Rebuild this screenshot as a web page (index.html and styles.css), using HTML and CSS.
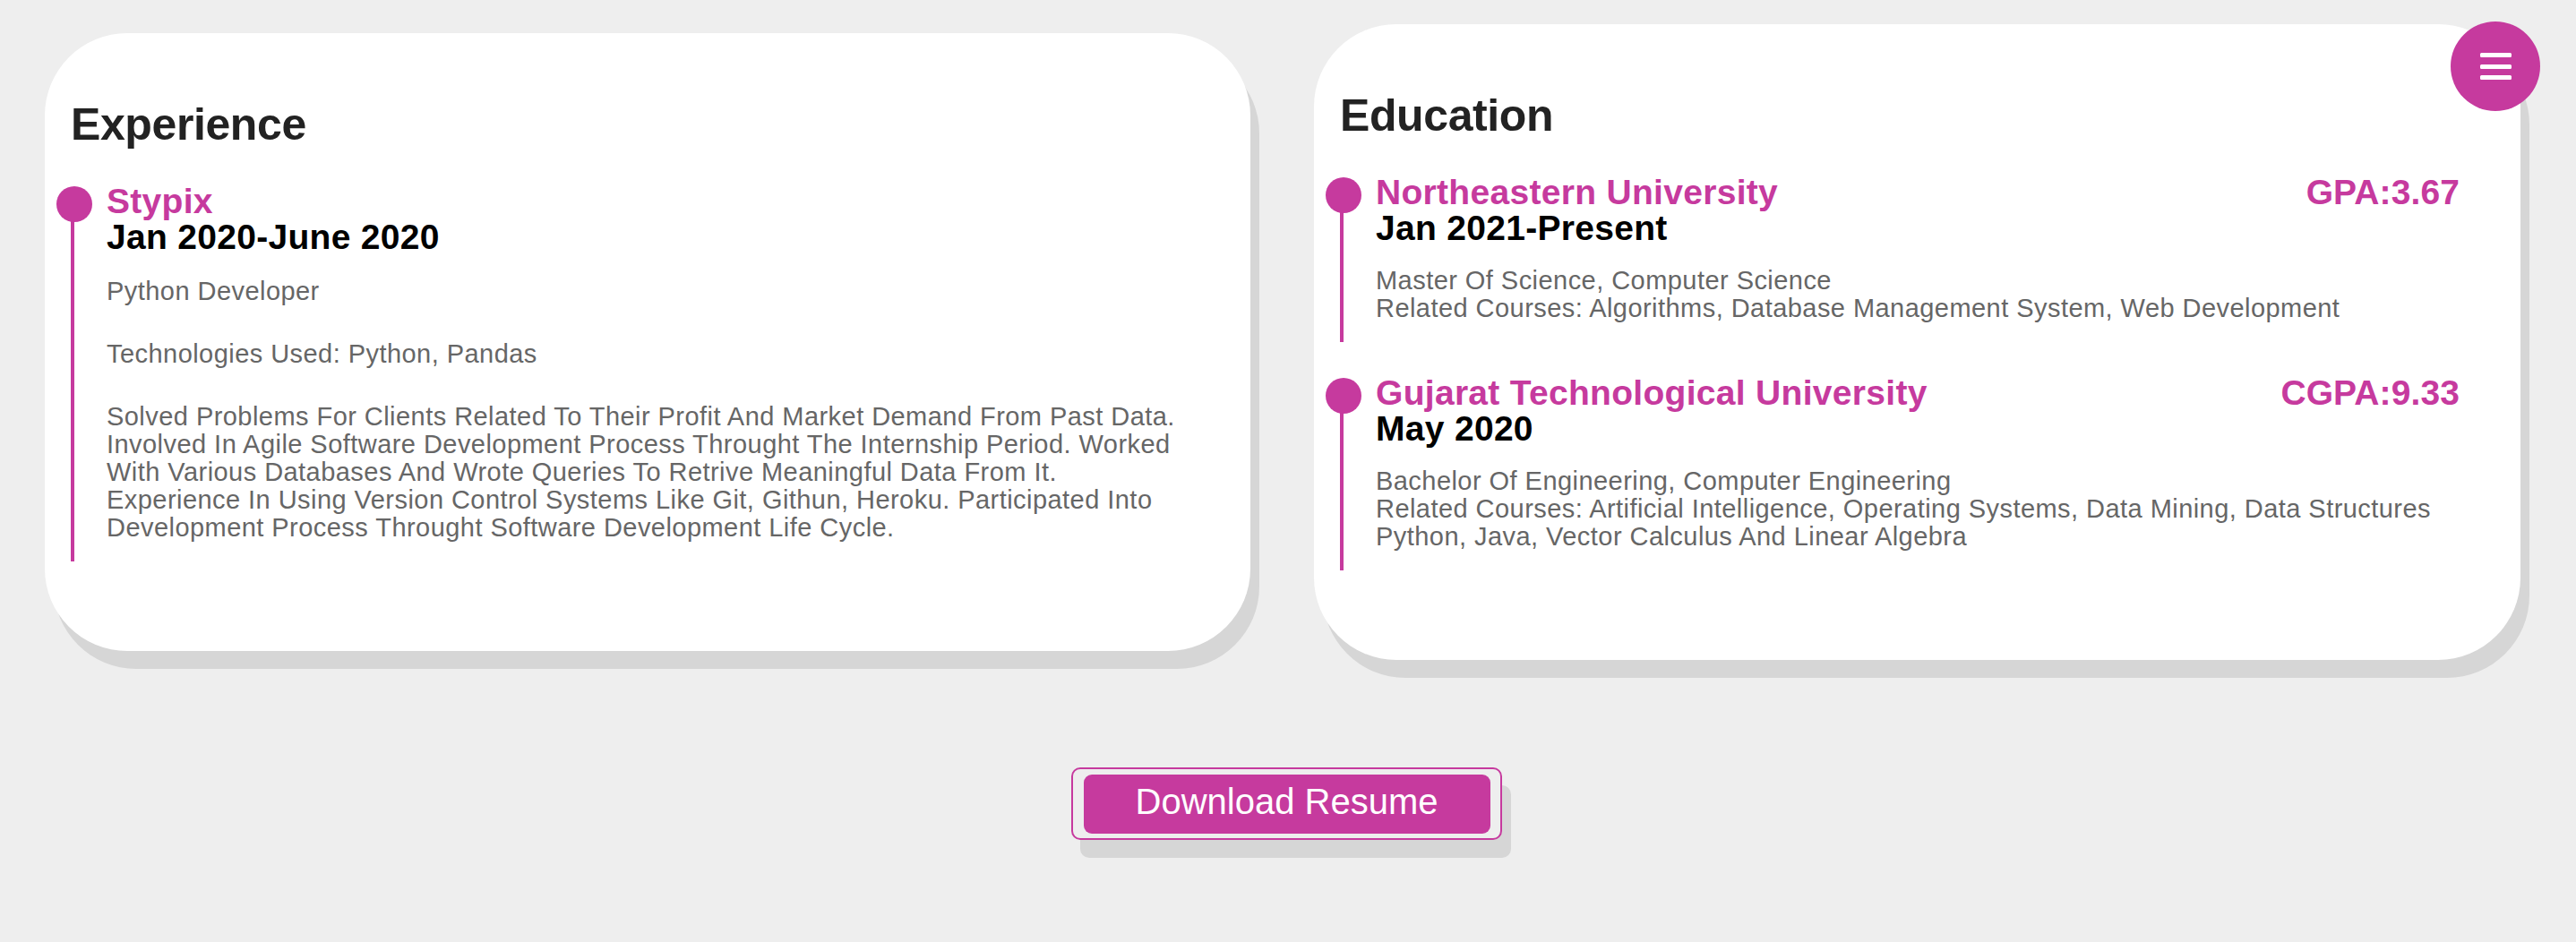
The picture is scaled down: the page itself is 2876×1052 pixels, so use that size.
FILE: index.html
```html
<!DOCTYPE html>
<html lang="en">
<head>
<meta charset="utf-8">
<title>Resume</title>
<link rel="stylesheet" href="styles.css">
</head>
<body>
<main class="page">
  <section class="row">
    <article class="card card-exp">
      <h2 class="card-title">Experience</h2>
      <div class="timeline">
        <div class="item">
          <div class="item-head">
            <h3 class="org">Stypix</h3>
          </div>
          <div class="date">Jan 2020-June 2020</div>
          <div class="desc">
            <p>Python Developer</p>
            <p>Technologies Used: Python, Pandas</p>
            <p>Solved Problems For Clients Related To Their Profit And Market Demand From Past Data.<br>Involved In Agile Software Development Process Throught The Internship Period. Worked<br>With Various Databases And Wrote Queries To Retrive Meaningful Data From It.<br>Experience In Using Version Control Systems Like Git, Githun, Heroku. Participated Into<br>Development Process Throught Software Development Life Cycle.</p>
          </div>
        </div>
      </div>
    </article>

    <article class="card card-edu">
      <h2 class="card-title">Education</h2>
      <div class="timeline">
        <div class="item">
          <div class="item-head">
            <h3 class="org">Northeastern University</h3>
            <span class="score">GPA:3.67</span>
          </div>
          <div class="date">Jan 2021-Present</div>
          <div class="desc">
            <p>Master Of Science, Computer Science<br>Related Courses: Algorithms, Database Management System, Web Development</p>
          </div>
        </div>
        <div class="item">
          <div class="item-head">
            <h3 class="org">Gujarat Technological University</h3>
            <span class="score">CGPA:9.33</span>
          </div>
          <div class="date">May 2020</div>
          <div class="desc">
            <p>Bachelor Of Engineering, Computer Engineering<br>Related Courses: Artificial Intelligence, Operating Systems, Data Mining, Data Structures<br>Python, Java, Vector Calculus And Linear Algebra</p>
          </div>
        </div>
      </div>
    </article>
  </section>

  <div class="download">
    <div class="download-frame">
      <a class="download-btn" href="#">Download Resume</a>
    </div>
  </div>
</main>

<button class="menu-btn" type="button" aria-label="Menu">
  <span class="bar"></span>
  <span class="bar"></span>
  <span class="bar"></span>
</button>
</body>
</html>
```

FILE: styles.css
```css
* {
  box-sizing: border-box;
}

html, body {
  margin: 0;
  padding: 0;
}

body {
  background: #eeeeee;
  font-family: "Liberation Sans", Arial, Helvetica, sans-serif;
  width: 2876px;
  height: 1052px;
  overflow: hidden;
}

.page {
  padding-top: 27px;
}

.row {
  display: grid;
  grid-template-columns: 1346px 1347px;
  column-gap: 71px;
  padding-left: 50px;
  align-items: center;
}

.card {
  background: #ffffff;
  border-radius: 92px;
  box-shadow: 10px 20px 0 #d6d6d6;
  padding: 72px 68px 100.5px 29px;
}

.card-exp {
  padding-right: 40px;
}

.card-title {
  margin: 0 0 36px 0;
  font-size: 50px;
  line-height: 60px;
  font-weight: 700;
  letter-spacing: -0.4px;
  color: #222222;
}

.timeline {
  display: flex;
  flex-direction: column;
  gap: 37.5px;
}

.item {
  position: relative;
  padding-left: 40px;
  padding-bottom: 21.5px;
}

.item::before {
  content: "";
  position: absolute;
  left: 0;
  top: 20px;
  bottom: 0;
  width: 4px;
  background: #c63a9e;
}

.item::after {
  content: "";
  position: absolute;
  left: -16px;
  top: 3px;
  width: 40px;
  height: 40px;
  border-radius: 50%;
  background: #c63a9e;
}

.item-head {
  display: flex;
  justify-content: space-between;
  align-items: baseline;
}

.org {
  margin: 0;
  font-size: 39px;
  line-height: 40px;
  font-weight: 700;
  letter-spacing: 0.3px;
  color: #c63a9e;
}

.score {
  font-size: 39px;
  line-height: 40px;
  font-weight: 700;
  letter-spacing: 0.1px;
  color: #c63a9e;
}

.date {
  font-size: 39px;
  line-height: 40px;
  font-weight: 700;
  letter-spacing: 0.3px;
  color: #000000;
}

.desc {
  margin-top: 23px;
}

.card-exp .desc {
  margin-top: 25px;
}

.desc p {
  margin: 0;
  font-size: 29px;
  line-height: 31px;
  letter-spacing: 0.45px;
  color: #666666;
  white-space: nowrap;
}

.card-exp .desc p {
  margin-bottom: 39px;
}

.card-exp .desc p:last-child {
  margin-bottom: 0;
}

.download {
  display: flex;
  justify-content: center;
  margin-top: 120px;
  padding-right: 4px;
}

.download-frame {
  border: 2px solid #c63a9e;
  border-radius: 10px;
  padding: 6px 11px 5px 12px;
  box-shadow: 10px 20px 0 #d6d6d6;
  background: #eeeeee;
}

.download-btn {
  display: block;
  width: 454px;
  height: 66px;
  padding-top: 7px;
  background: #c63a9e;
  border-radius: 9px;
  color: #ffffff;
  text-decoration: none;
  text-align: center;
  font-size: 40px;
  line-height: 46px;
}

.menu-btn {
  position: fixed;
  top: 24px;
  right: 40px;
  width: 100px;
  height: 100px;
  border: none;
  border-radius: 50%;
  background: #c63a9e;
  padding: 0;
  display: flex;
  flex-direction: column;
  align-items: center;
  justify-content: center;
  gap: 7.5px;
  cursor: pointer;
}

.bar {
  display: block;
  width: 35px;
  height: 5px;
  border-radius: 1.5px;
  background: #ffffff;
}
```
